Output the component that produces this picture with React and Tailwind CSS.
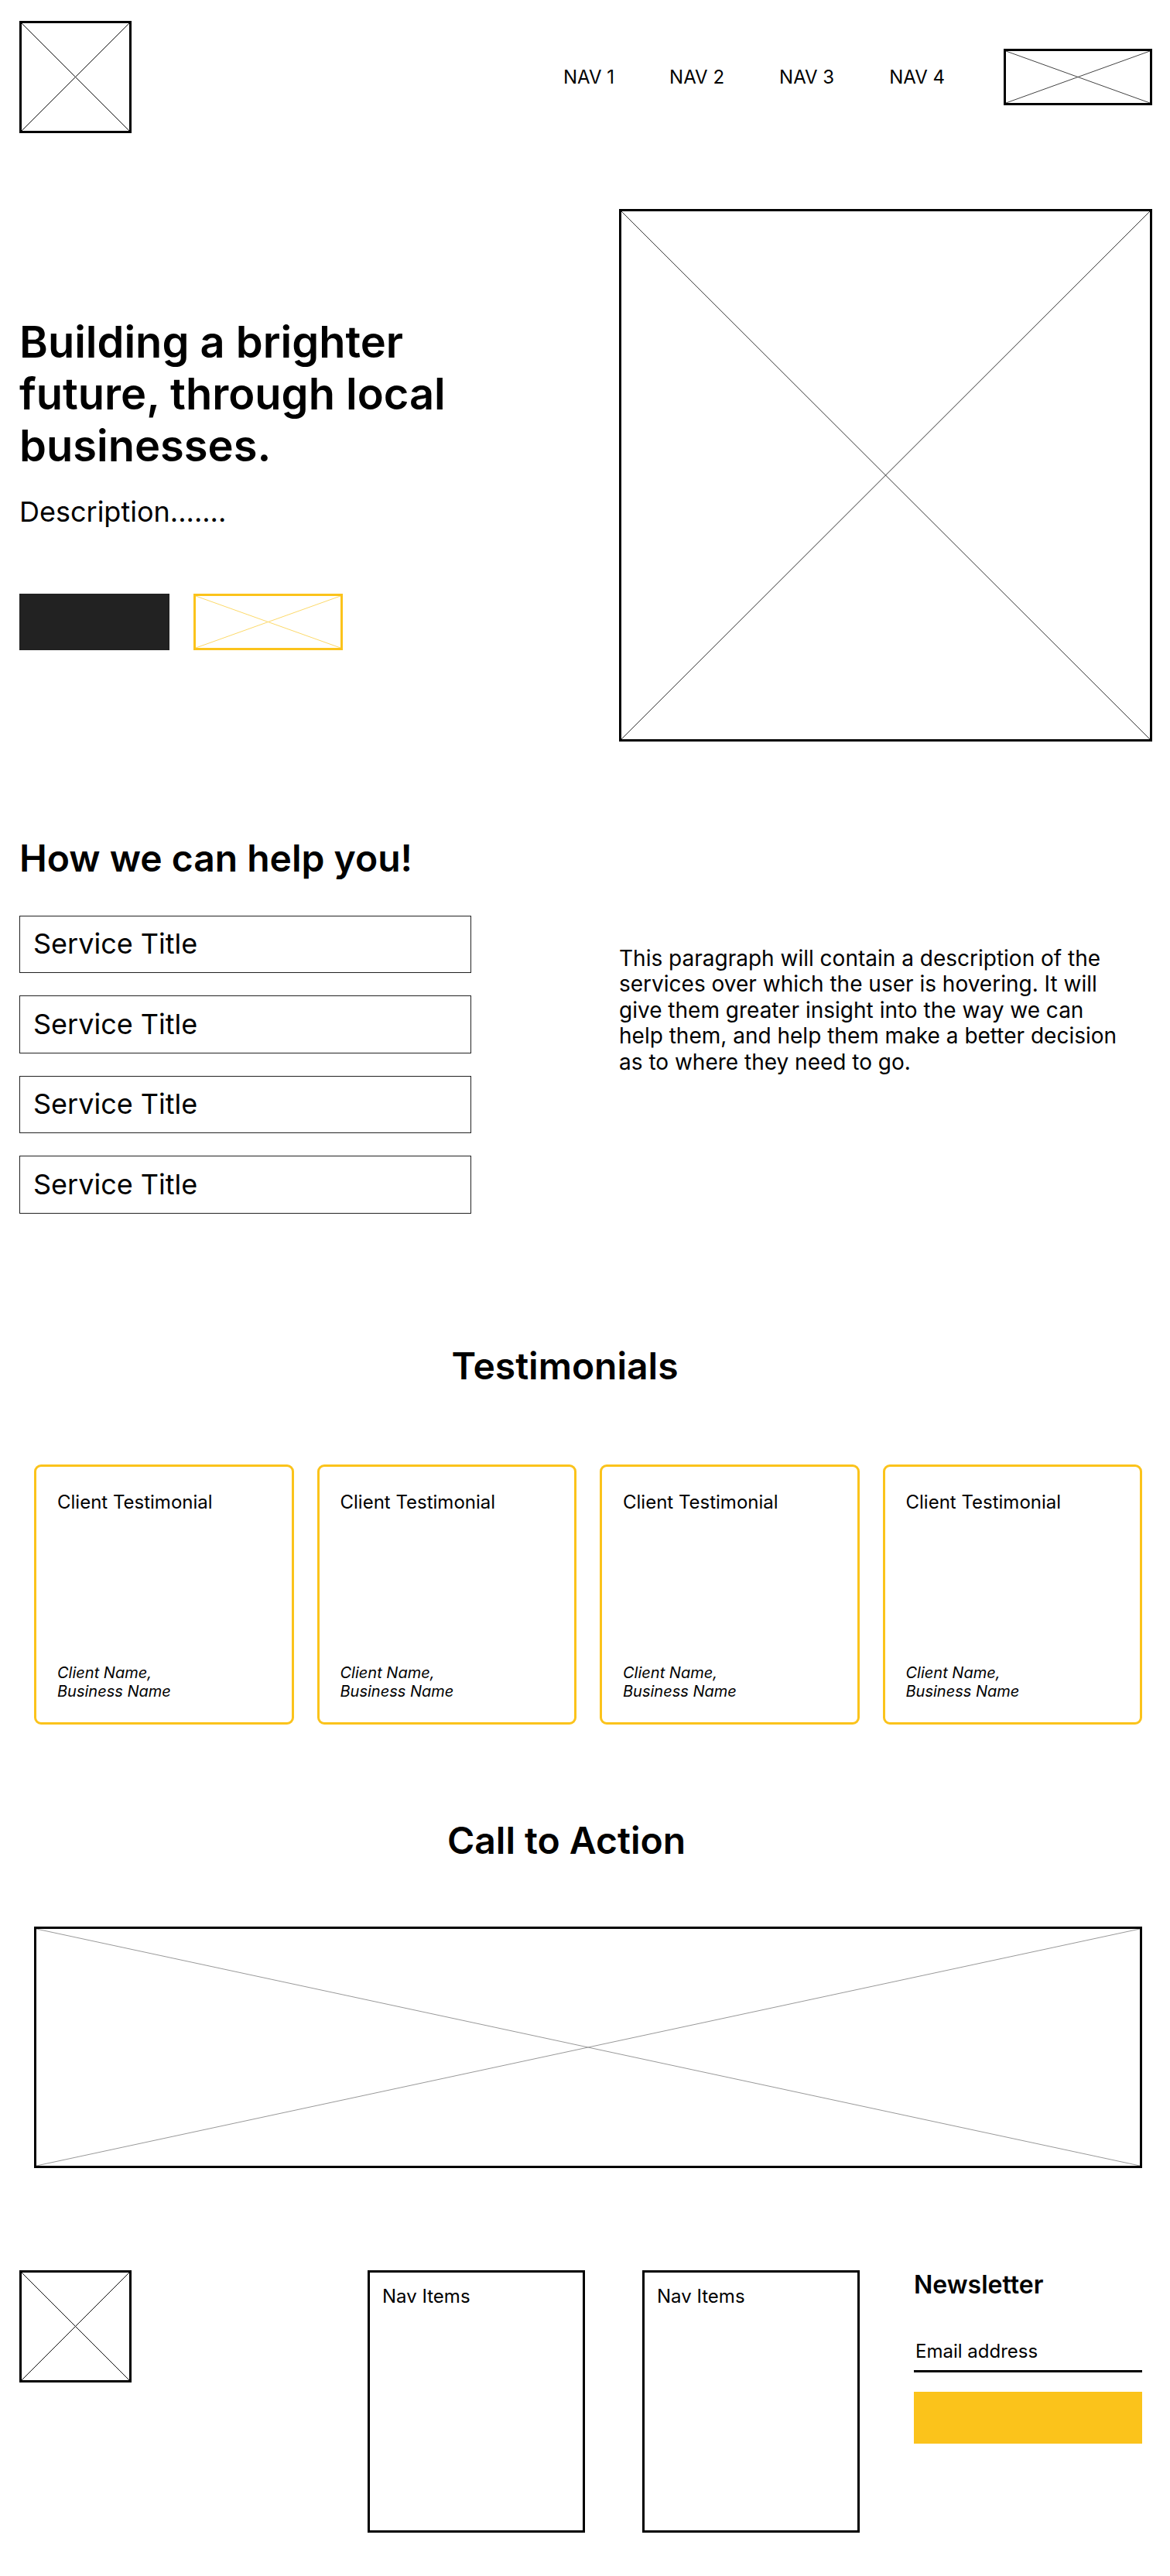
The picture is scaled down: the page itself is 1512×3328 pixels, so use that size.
import React from "react";

function Cross({ color = "#444" }) {
  return (
    <svg
      className="absolute inset-0 w-full h-full"
      viewBox="0 0 100 100"
      preserveAspectRatio="none"
    >
      <line x1="0" y1="0" x2="100" y2="100" stroke={color} strokeWidth="1" vectorEffect="non-scaling-stroke" />
      <line x1="100" y1="0" x2="0" y2="100" stroke={color} strokeWidth="1" vectorEffect="non-scaling-stroke" />
    </svg>
  );
}

function Placeholder({ className, color }) {
  return (
    <div className={"relative shrink-0 " + className}>
      <Cross color={color} />
    </div>
  );
}

function ServiceBox() {
  return (
    <div className="h-[74.5px] border border-[#222] flex items-center pl-[17px] text-[36px] leading-[1.2]">
      Service Title
    </div>
  );
}

function Testimonial() {
  return (
    <div className="w-[335.5px] h-[336px] border-[3px] border-[#fbc31b] rounded-[9px] flex flex-col justify-between pl-[27px] pr-[20px] pt-[31px] pb-[28px]">
      <div className="text-[24px] leading-[1.21]">Client Testimonial</div>
      <div className="text-[20px] leading-[24px] italic">
        <div>Client Name,</div>
        <div>Business Name</div>
      </div>
    </div>
  );
}

function FooterNav() {
  return (
    <div className="w-[281px] h-[339px] border-[3px] border-black p-[16px] text-[24px] leading-[1.21]">
      Nav Items
    </div>
  );
}

export default function App() {
  return (
    <div className="w-[1512px] bg-white text-black font-['Inter',sans-serif]">
      {/* Header */}
      <header className="flex items-center justify-between pl-[25px] pr-[23px] pt-[27px]">
        <Placeholder className="w-[145px] h-[145px] border-[3px] border-black" color="#111" />
        <div className="flex items-center">
          <nav className="flex gap-[71px] text-[24px] leading-[1.21]">
            <span>NAV 1</span>
            <span>NAV 2</span>
            <span>NAV 3</span>
            <span>NAV 4</span>
          </nav>
          <Placeholder className="ml-[76px] w-[192px] h-[73px] border-[3px] border-black" color="#444" />
        </div>
      </header>

      {/* Hero */}
      <section className="flex justify-between pl-[25px] pr-[23px] mt-[98px]">
        <div className="pt-[139px]">
          <h1 className="text-[56px] leading-[1.2] font-semibold w-[600px]">
            Building a brighter
            <br />
            future, through local
            <br />
            businesses.
          </h1>
          <p className="mt-[29.5px] text-[36px] leading-[1.2]">Description.......</p>
          <div className="flex gap-[31px] mt-[84px]">
            <div className="w-[194px] h-[73px] bg-[#222222]" />
            <Placeholder className="w-[193px] h-[73px] border-[3px] border-[#fbc31b]" color="#fcd96a" />
          </div>
        </div>
        <Placeholder className="w-[689px] h-[688px] border-[3px] border-black" color="#333" />
      </section>

      {/* Services */}
      <section className="px-[25px] mt-[122px]">
        <h2 className="text-[48px] leading-[1.2] font-semibold">How we can help you!</h2>
        <div className="flex mt-[45px]">
          <div className="w-[584px] flex flex-col gap-[29px]">
            <ServiceBox />
            <ServiceBox />
            <ServiceBox />
            <ServiceBox />
          </div>
          <p className="ml-[191px] mt-[39px] w-[655px] text-[28px] leading-[1.2]">
            This paragraph will contain a description of the services over which the user is hovering. It will give them greater insight into the way we can help them, and help them make a better decision as to where they need to go.
          </p>
        </div>
      </section>

      {/* Testimonials */}
      <section className="mt-[168px]">
        <h2 className="text-[48px] leading-[1.2] font-semibold text-center pr-[52px]">Testimonials</h2>
        <div className="flex gap-[30px] pl-[44px] mt-[99px]">
          <Testimonial />
          <Testimonial />
          <Testimonial />
          <Testimonial />
        </div>
      </section>

      {/* Call to action */}
      <section className="mt-[121px]">
        <h2 className="text-[48px] leading-[1.2] font-semibold text-center pr-[48px]">Call to Action</h2>
        <div className="pl-[44px] pr-[36px] mt-[82px]">
          <Placeholder className="w-full h-[312px] border-[3px] border-black" color="#999" />
        </div>
      </section>

      {/* Footer */}
      <footer className="flex items-start pl-[25px] mt-[132px] pb-[56px]">
        <Placeholder className="w-[145px] h-[145px] border-[3px] border-black" color="#111" />
        <div className="ml-[305px]">
          <FooterNav />
        </div>
        <div className="ml-[74px]">
          <FooterNav />
        </div>
        <div className="ml-[70px] w-[295px]">
          <h3 className="text-[32px] leading-[1.21] font-semibold">Newsletter</h3>
          <div className="mt-[51.5px] pl-[2px] pb-[10px] border-b-[3px] border-black text-[24px] leading-[1.21]">
            Email address
          </div>
          <div className="mt-[24.5px] h-[67px] bg-[#fbc31b]" />
        </div>
      </footer>
    </div>
  );
}
